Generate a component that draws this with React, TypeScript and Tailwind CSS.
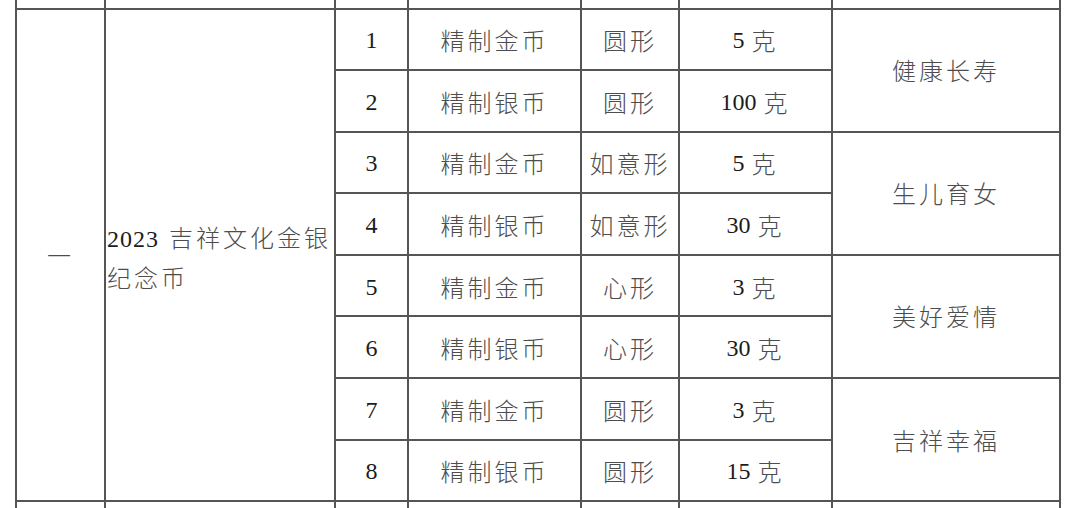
import React from 'react';

const rows = [
  { no: '1', type: '精制金币', shape: '圆形', weight: '5', theme: '健康长寿' },
  { no: '2', type: '精制银币', shape: '圆形', weight: '100' },
  { no: '3', type: '精制金币', shape: '如意形', weight: '5', theme: '生儿育女' },
  { no: '4', type: '精制银币', shape: '如意形', weight: '30' },
  { no: '5', type: '精制金币', shape: '心形', weight: '3', theme: '美好爱情' },
  { no: '6', type: '精制银币', shape: '心形', weight: '30' },
  { no: '7', type: '精制金币', shape: '圆形', weight: '3', theme: '吉祥幸福' },
  { no: '8', type: '精制银币', shape: '圆形', weight: '15' },
];

const cjk = "font-['Noto_Sans_CJK_SC',sans-serif] text-[#4d4d4d] font-light tracking-[3px]";
const num = "font-['Liberation_Serif','Times_New_Roman',serif] text-[#1c1c1c]";
const cell = 'bg-white flex items-center justify-center pt-[2px]';

const Cjk = ({ children }: { children: React.ReactNode }) => (
  <span className={cjk}>{children}</span>
);

export default function App() {
  return (
    <div className="h-[508px] overflow-hidden bg-white text-[24px] leading-none">
      <div className="ml-[15px] w-fit grid grid-cols-[87px_228px_71px_171px_96px_151px_226px] grid-rows-[7.5px_repeat(8,59.6px)_20px] gap-[2px] px-[2px] bg-[#555]">
        {Array.from({ length: 7 }).map((_, i) => (
          <div key={'t' + i} className="bg-white" />
        ))}

        <div className="bg-white row-span-8 flex items-center justify-center">
          <Cjk>一</Cjk>
        </div>
        <div className="bg-white row-span-8 flex items-center pl-[1px] pt-[6px]">
          <div className="leading-[38px]">
            <span className={`${num} tracking-[1px] mr-[10px]`}>2023</span>
            <Cjk>吉祥文化金银</Cjk>
            <br />
            <Cjk>纪念币</Cjk>
          </div>
        </div>

        {rows.map((r) => (
          <React.Fragment key={r.no}>
            <div className={cell}>
              <span className={num}>{r.no}</span>
            </div>
            <div className={cell}>
              <Cjk>{r.type}</Cjk>
            </div>
            <div className={cell}>
              <Cjk>{r.shape}</Cjk>
            </div>
            <div className={cell}>
              <span className={`${num} mr-[7px]`}>{r.weight}</span>
              <Cjk>克</Cjk>
            </div>
            {r.theme && (
              <div className="bg-white row-span-2 flex items-center justify-center">
                <Cjk>{r.theme}</Cjk>
              </div>
            )}
          </React.Fragment>
        ))}

        {Array.from({ length: 7 }).map((_, i) => (
          <div key={'b' + i} className="bg-white" />
        ))}
      </div>
    </div>
  );
}
